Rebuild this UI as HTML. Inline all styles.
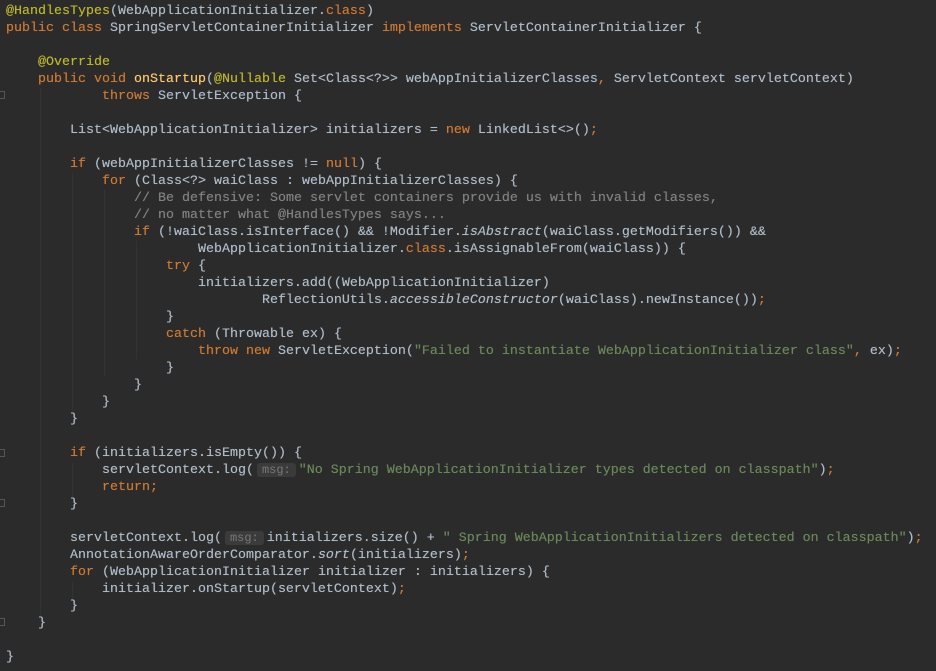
<!DOCTYPE html>
<html><head><meta charset="utf-8"><style>
html,body{margin:0;padding:0;background:#2b2b2b;width:936px;height:671px;overflow:hidden}
pre{margin:0;position:absolute;left:6px;top:3px;font-family:"Liberation Mono",monospace;font-size:13.33px;line-height:17px;color:#adbac7;text-shadow:0 0 0.4px currentColor}
.k{color:#cc7832}.a{color:#bbb529}.s{color:#6a8759}.c{color:#808080}.m{color:#ffc66d}.i{font-style:italic}
.h{display:inline-block;background:#3b3b3b;color:#787878;font-size:12px;line-height:14px;padding:0 5px;margin:0 3px 0 3px;border-radius:3px;vertical-align:0;text-shadow:none}
.g{position:absolute;width:1px;background:#333}
.f{position:absolute;left:0;width:5px;height:8px;border:1px solid #555;border-left:none;box-sizing:border-box}
</style></head><body>
<div class="g" style="left:40px;top:88px;height:527px"></div>
<div class="g" style="left:72px;top:173px;height:238px"></div>
<div class="g" style="left:104px;top:190px;height:187px"></div>
<div class="g" style="left:136px;top:241px;height:118px"></div>
<div class="g" style="left:72px;top:463px;height:34px"></div>
<div class="g" style="left:72px;top:582px;height:17px"></div>
<div class="f" style="top:91px"></div>
<div class="f" style="top:618px"></div>
<div class="f" style="top:449px"></div>
<div class="f" style="top:499px"></div>
<pre><span class="a">@HandlesTypes</span>(WebApplicationInitializer.<span class="k">class</span>)
<span class="k">public class </span>SpringServletContainerInitializer <span class="k">implements </span>ServletContainerInitializer {

    <span class="a">@Override</span>
    <span class="k">public void </span><span class="m">onStartup</span>(<span class="a">@Nullable </span>Set&lt;Class&lt;?&gt;&gt; webAppInitializerClasses<span class="k">, </span>ServletContext servletContext)
            <span class="k">throws </span>ServletException {

        List&lt;WebApplicationInitializer&gt; initializers = <span class="k">new </span>LinkedList&lt;&gt;()<span class="k">;</span>

        <span class="k">if </span>(webAppInitializerClasses != <span class="k">null</span>) {
            <span class="k">for </span>(Class&lt;?&gt; waiClass : webAppInitializerClasses) {
                <span class="c">// Be defensive: Some servlet containers provide us with invalid classes,</span>
                <span class="c">// no matter what @HandlesTypes says...</span>
                <span class="k">if </span>(!waiClass.isInterface() &amp;&amp; !Modifier.<span class="i">isAbstract</span>(waiClass.getModifiers()) &amp;&amp;
                        WebApplicationInitializer.<span class="k">class</span>.isAssignableFrom(waiClass)) {
                    <span class="k">try </span>{
                        initializers.add((WebApplicationInitializer)
                                ReflectionUtils.<span class="i">accessibleConstructor</span>(waiClass).newInstance())<span class="k">;</span>
                    }
                    <span class="k">catch </span>(Throwable ex) {
                        <span class="k">throw new </span>ServletException(<span class="s">"Failed to instantiate WebApplicationInitializer class"</span><span class="k">, </span>ex)<span class="k">;</span>
                    }
                }
            }
        }

        <span class="k">if </span>(initializers.isEmpty()) {
            servletContext.log(<span class="h">msg:</span><span class="s">"No Spring WebApplicationInitializer types detected on classpath"</span>)<span class="k">;</span>
            <span class="k">return;</span>
        }

        servletContext.log(<span class="h">msg:</span>initializers.size() + <span class="s">" Spring WebApplicationInitializers detected on classpath"</span>)<span class="k">;</span>
        AnnotationAwareOrderComparator.<span class="i">sort</span>(initializers)<span class="k">;</span>
        <span class="k">for </span>(WebApplicationInitializer initializer : initializers) {
            initializer.onStartup(servletContext)<span class="k">;</span>
        }
    }

}</pre>
</body></html>
